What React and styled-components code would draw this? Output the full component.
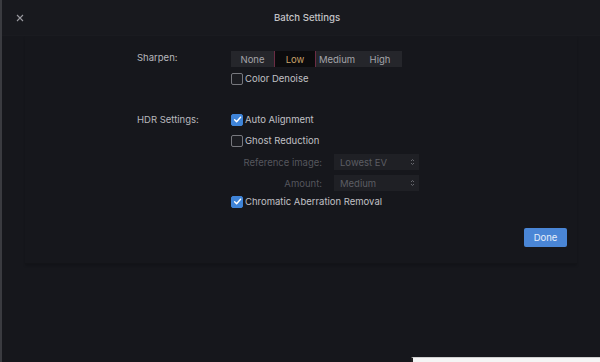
import React, { useState } from "react";
import styled, { createGlobalStyle } from "styled-components";

const GlobalStyle = createGlobalStyle`
  html, body {
    margin: 0;
    padding: 0;
    background: #16171c;
  }
  * {
    box-sizing: border-box;
  }
`;

const Window = styled.div`
  position: relative;
  width: 600px;
  height: 362px;
  overflow: hidden;
  background: #16171c;
  border-left: 2px solid #3a3b40;
  font-family: Inter, "Noto Sans", "Liberation Sans", sans-serif;
  color: #b8b8bd;
`;

const Header = styled.div`
  display: grid;
  grid-template-columns: 1fr auto 1fr;
  align-items: center;
  height: 36px;
  padding-left: 12px;
  background: #18191e;
  border-bottom: 1px solid #1a1b20;
`;

const CloseBtn = styled.div`
  justify-self: start;
  display: flex;
  width: 12px;
  height: 12px;
  align-items: center;
  justify-content: center;
  cursor: pointer;
`;

const Title = styled.div`
  font-size: 9.6px;
  font-weight: 500;
  color: #c4c4c8;
`;

const Panel = styled.div`
  margin: 0 23px 0 23px;
  height: 228px;
  padding: 15px 10px 0 112px;
  border-bottom: 1px solid #131418;
  box-shadow: 0 2px 2px rgba(0, 0, 0, 0.15);
  display: flex;
  flex-direction: column;
`;

const Form = styled.div`
  display: grid;
  grid-template-columns: 94px 1fr;
`;

const Label = styled.div`
  font-size: 9.5px;
  color: #b8b8bd;
  padding-top: ${(p) => p.$top || 2}px;
`;

const Controls = styled.div`
  display: flex;
  flex-direction: column;
  align-items: flex-start;
  gap: ${(p) => p.$gap || 5}px;
`;

const Segmented = styled.div`
  display: flex;
  height: 16px;
`;

const Segment = styled.div`
  width: ${(p) => p.$w}px;
  display: flex;
  align-items: center;
  justify-content: center;
  font-size: 9.5px;
  background: ${(p) => (p.$active ? "#0b0b0d" : "#25262b")};
  color: ${(p) => (p.$active ? "#c9a26a" : "#a4a4a9")};
  border-left: 1px solid ${(p) => (p.$active ? "#6b2c44" : "transparent")};
  border-right: 1px solid ${(p) => (p.$active ? "#6b2c44" : "transparent")};
`;

const CheckRow = styled.label`
  display: flex;
  align-items: center;
  gap: 2px;
  height: 13px;
  margin-top: ${(p) => p.$shift || 0}px;
  font-size: 9.5px;
  color: #c0c0c5;
`;

const Box = styled.span`
  width: 12px;
  height: 12px;
  border-radius: 2px;
  display: flex;
  align-items: center;
  justify-content: center;
  background: ${(p) => (p.$checked ? "#3f84d8" : "#1b1c21")};
  border: 1px solid ${(p) => (p.$checked ? "#3f84d8" : "#77787e")};
`;

const SubGrid = styled.div`
  display: grid;
  grid-template-columns: 92px 85px;
  column-gap: 12px;
  row-gap: 5px;
  align-items: center;
  margin: -1px 0 0 -1px;
`;

const SubLabel = styled.div`
  text-align: right;
  font-size: 9.5px;
  color: #55565c;
`;

const Select = styled.div`
  height: 16px;
  display: flex;
  align-items: center;
  justify-content: space-between;
  padding: 0 4px 0 6px;
  background: #1f2025;
  font-size: 9.5px;
  color: #5c5d63;
`;

const Footer = styled.div`
  display: flex;
  justify-content: flex-end;
  margin-top: auto;
  padding: 0 0 16px 0;
`;

const DoneBtn = styled.button`
  width: 43px;
  height: 19px;
  border: none;
  border-radius: 2px;
  background: #4a86d6;
  color: #e6eefa;
  font-family: inherit;
  font-size: 9.5px;
  cursor: pointer;
`;

const Watermark = styled.div`
  position: absolute;
  left: 409px;
  top: 357px;
  width: 191px;
  height: 10px;
  background: #f4f4f4;
  border-left: 2px solid #222;
  border-top: 1px solid #cfcfcf;
`;

function Check({ checked }) {
  return (
    <Box $checked={checked}>
      {checked && (
        <svg width="9" height="9" viewBox="0 0 10 10">
          <path d="M1.8 5.2 L4 7.4 L8.4 2.4" fill="none" stroke="#fff" strokeWidth="1.6" strokeLinecap="round" strokeLinejoin="round" />
        </svg>
      )}
    </Box>
  );
}

function Stepper() {
  return (
    <svg width="5" height="8" viewBox="0 0 5 8">
      <path d="M1 3 L2.5 1.5 L4 3 M1 5 L2.5 6.5 L4 5" fill="none" stroke="#66676d" strokeWidth="1" />
    </svg>
  );
}

const sharpenOptions = [
  { name: "None", w: 43 },
  { name: "Low", w: 42 },
  { name: "Medium", w: 42 },
  { name: "High", w: 44 },
];

export default function App() {
  const [sharpen] = useState("Low");

  return (
    <>
      <GlobalStyle />
      <Window>
        <Header>
          <CloseBtn>
            <svg width="8" height="8" viewBox="0 0 8 8">
              <path d="M1 1 L7 7 M7 1 L1 7" stroke="#9a9aa0" strokeWidth="1.1" />
            </svg>
          </CloseBtn>
          <Title>Batch Settings</Title>
          <div />
        </Header>

        <Panel>
          <Form>
            <Label $top={1}>Sharpen:</Label>
            <Controls>
              <Segmented>
                {sharpenOptions.map((o) => (
                  <Segment key={o.name} $w={o.w} $active={o.name === sharpen}>
                    {o.name}
                  </Segment>
                ))}
              </Segmented>
              <CheckRow>
                <Check />
                Color Denoise
              </CheckRow>
            </Controls>
          </Form>

          <Form style={{ marginTop: 28 }}>
            <Label $top={1}>HDR Settings:</Label>
            <Controls $gap={8}>
              <CheckRow>
                <Check checked />
                Auto Alignment
              </CheckRow>
              <CheckRow>
                <Check />
                Ghost Reduction
              </CheckRow>
              <SubGrid>
                <SubLabel>Reference image:</SubLabel>
                <Select>
                  Lowest EV
                  <Stepper />
                </Select>
                <SubLabel>Amount:</SubLabel>
                <Select>
                  Medium
                  <Stepper />
                </Select>
              </SubGrid>
              <CheckRow $shift={-4}>
                <Check checked />
                Chromatic Aberration Removal
              </CheckRow>
            </Controls>
          </Form>

          <Footer>
            <DoneBtn>Done</DoneBtn>
          </Footer>
        </Panel>

        <Watermark />
      </Window>
    </>
  );
}
